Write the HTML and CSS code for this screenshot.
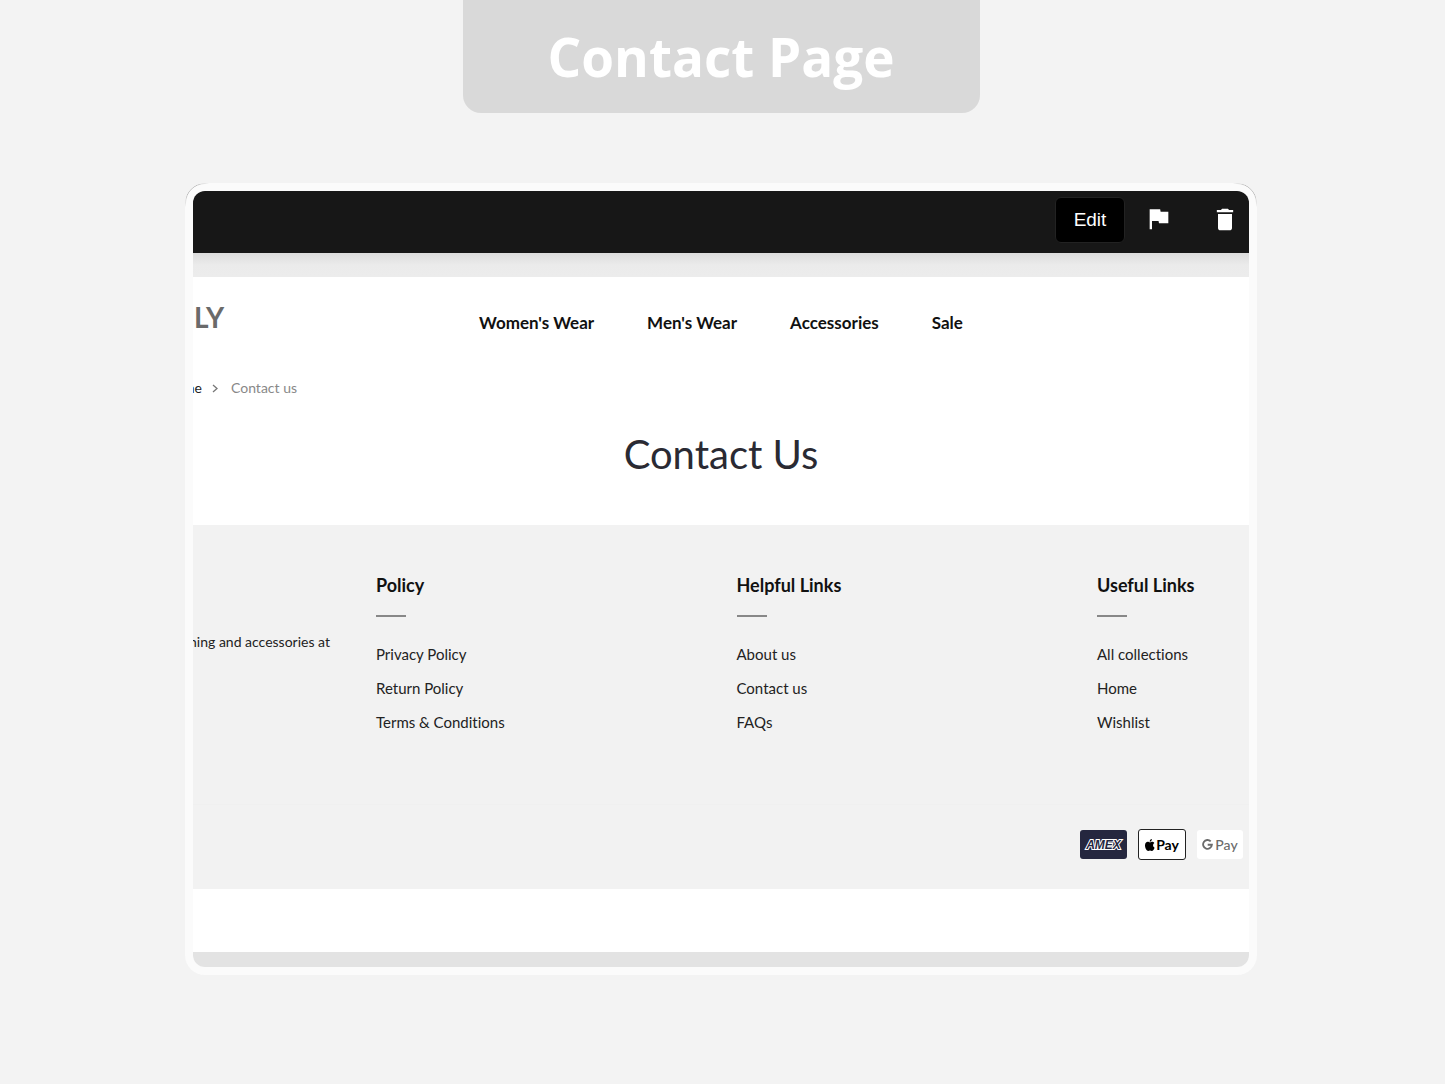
FILE: index.html
```html
<!DOCTYPE html>
<html lang="en">
<head>
  <meta charset="UTF-8">
  <meta name="viewport" content="width=device-width, initial-scale=1.0">
  <title>Contact Page</title>
  <link rel="stylesheet" href="styles.css">
</head>
<body>
  <div class="label">Contact Page</div>

  <div class="frame">
    <div class="screen">
      <!-- Editor bar -->
      <div class="toolbar">
        <button class="edit">Edit</button>
        <button class="icon" aria-label="Flag">
          <svg width="28" height="28" viewBox="0 0 24 24" fill="#fff"><path d="M13.400 4L13 2H4v17h2v-7h5.600l.4 2h8V4z"/></svg>
        </button>
        <button class="icon" aria-label="Delete">
          <svg width="28" height="28" viewBox="0 0 24 24" fill="#fff"><path d="M6 18c0 1.100.9 2 2 2h8c1.100 0 2-.9 2-2V6H6zM19 2.500h-3.500l-1-1h-5l-1 1H5v2h14z"/></svg>
        </button>
      </div>
      <div class="strip"></div>

      <!-- Shop page -->
      <header class="header">
        <a class="logo" href="#">LY</a>
        <nav class="nav">
          <a href="#">Women's Wear</a>
          <a href="#">Men's Wear</a>
          <a href="#">Accessories</a>
          <a href="#">Sale</a>
        </nav>
      </header>
      <main class="main">
        <div class="crumbs">
          <a href="#">me</a>
          <svg width="6" height="9" viewBox="0 0 6 9" fill="none" stroke="#777" stroke-width="1.300"><path d="M1 1l4 3.500L1 8"/></svg>
          <span>Contact us</span>
        </div>
        <h1>Contact Us</h1>
      </main>

      <footer class="footer">
        <div class="columns">
          <div class="about"><p>hing and accessories at</p></div>
          <div class="col">
            <h2>Policy</h2>
            <a href="#">Privacy Policy</a>
            <a href="#">Return Policy</a>
            <a href="#">Terms &amp; Conditions</a>
          </div>
          <div class="col">
            <h2>Helpful Links</h2>
            <a href="#">About us</a>
            <a href="#">Contact us</a>
            <a href="#">FAQs</a>
          </div>
          <div class="col">
            <h2>Useful Links</h2>
            <a href="#">All collections</a>
            <a href="#">Home</a>
            <a href="#">Wishlist</a>
          </div>
        </div>
        <div class="payments">
          <span class="pay amex">AMEX</span>
          <span class="pay apple">
            <svg width="10" height="12" viewBox="0 0 22 26"><path d="M16 6c-2 0-3.500 1.300-5 1.300S8 6 6 6c-3 0-6 3-6 8 0 6 4 12 7 12 1.500 0 2.500-1 4-1s2.500 1 4 1c2.500 0 5-3.500 6-7-4-2-4.500-8-.5-10.500C19.500 7 18 6 16 6zM15 0c-3 .5-5 3-4.500 6C13.500 6 15.500 3 15 0z"/></svg>Pay
          </span>
          <span class="pay google">
            <svg width="11" height="11" viewBox="0 0 12 12" fill="none" stroke="#6b6b6b" stroke-width="2"><path d="M9.500 2.600A4.800 4.800 0 1 0 10.800 6.300H6.200"/></svg>Pay
          </span>
        </div>
      </footer>
      <div class="blank"></div>
      <div class="bottom"></div>
    </div>
  </div>
</body>
</html>
```

FILE: styles.css
```css
* { box-sizing: border-box; }
body {
  margin: 0; padding: 0 188px 0 185px; min-height: 100vh;
  background: #f3f3f3; font-family: Lato, sans-serif; color: #222;
  font-variant-ligatures: no-common-ligatures;
}
a { color: inherit; text-decoration: none; }
h1, h2, p { margin: 0; }

.label {
  width: 517px; max-width: 100%; margin: 0 auto 70px; padding: 22px 0 21px;
  background: #d9d9d9; color: #fff; border-radius: 0 0 18px 18px;
  font: 700 53px/70px "Open Sans", sans-serif; text-align: center;
}

.frame { position: relative; padding: 8px; background: #fbfbfb; border-radius: 20px; }
/* hairline that only shows on the top corners */
.frame::before {
  content: ""; position: absolute; inset: 0; border: 1px solid #bbb; border-radius: 20px;
  -webkit-mask: radial-gradient(circle at 0 0, #000 12px, transparent 24px), radial-gradient(circle at 100% 0, #000 12px, transparent 24px);
}
.screen { border-radius: 12px; overflow: hidden; background: #fff; }

.toolbar {
  display: flex; justify-content: flex-end; align-items: center;
  height: 62px; padding: 0 10px 4px 0; background: #171717;
}
.edit {
  width: 70px; height: 46px; margin-right: 20px; padding: 0;
  background: #000; color: #fff; border: 1px solid #222; border-radius: 6px;
  font: 19px "Liberation Sans", sans-serif;
}
.icon { display: flex; padding: 2px 0 0; border: 0; background: none; }
.icon + .icon { margin-left: 38px; }
.strip { height: 24px; background: linear-gradient(#dcdcdc, #ebebeb 50%, #ececec); }

.header {
  display: grid; grid-template-columns: 1fr auto 1fr; align-items: start;
  padding-top: 26px;
}
.logo { padding-left: 1px; color: #6a6a6a; font-size: 28px; line-height: 28px; font-weight: 700; }
.nav { display: flex; gap: 53px; padding-top: 6px; font-size: 17px; line-height: 28px; font-weight: 700; color: #111; }

.main { padding: 41px 0 46px; }
.crumbs {
  display: flex; justify-content: flex-end; align-items: center;
  width: 104px; font-size: 14px; line-height: 20px; white-space: nowrap; color: #888;
}
.crumbs a { color: #222; }
.crumbs svg { flex: none; margin: 0 13px 0 10px; }
h1 { margin-top: 31px; font-size: 40px; line-height: 50px; font-weight: 400; text-align: center; color: #2a2a33; }

.footer { background: #f2f2f2; font-size: 15px; line-height: 18px; }
.columns {
  display: grid; grid-template-columns: 183px 1fr 1fr 152px;
  padding: 47px 0 73px; border-bottom: 1px solid #f0f0f0;
}
.about { display: flex; justify-content: flex-end; padding: 61px 46px 0 0; font-size: 14px; white-space: nowrap; }
.col { display: flex; flex-direction: column; align-items: flex-start; gap: 16px; }
.col h2 { margin-bottom: 12px; font-size: 18px; line-height: 26px; color: #111; }
.col h2::after { content: ""; display: block; width: 30px; height: 2px; margin-top: 17px; background: #888; }

.payments { display: flex; justify-content: flex-end; align-items: center; gap: 11px; padding: 24px 6px 29px 0; }
.pay {
  display: flex; align-items: center; justify-content: center; gap: 1px;
  width: 47px; height: 29px; border-radius: 3px; background: #fff;
  font-size: 14px; font-weight: 700;
}
.amex {
  background: #25273f; color: #25273f; font: italic 700 12px "Liberation Sans", sans-serif;
  -webkit-text-stroke: 2px #fff; paint-order: stroke fill;
}
.apple { width: 48px; height: 31px; border: 1px solid #222; color: #000; }
.google { width: 46px; color: #6b6b6b; font-weight: 500; gap: 2px; }

.blank { height: 63px; }
.bottom { height: 15px; background: #e3e3e3; }
```
